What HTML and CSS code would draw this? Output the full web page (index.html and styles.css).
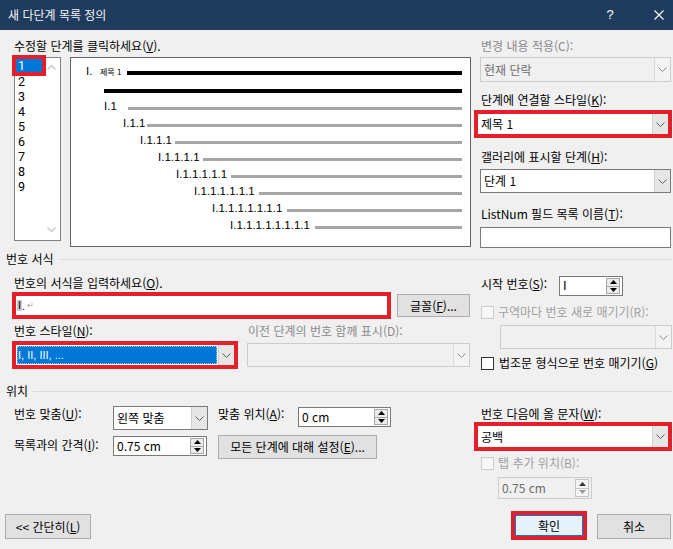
FILE: index.html
```html
<!DOCTYPE html>
<html lang="ko">
<head>
<meta charset="utf-8">
<title>새 다단계 목록 정의</title>
<link rel="stylesheet" href="styles.css">
</head>
<body>
<div class="dlg">
  <div class="titlebar">
    <span class="title">새 다단계 목록 정의</span>
    <span class="tb-help">?</span>
    <svg class="tb-close" width="10" height="10" viewBox="0 0 10 10"><path d="M0.5 0.5L9.5 9.5M9.5 0.5L0.5 9.5" stroke="#fff" stroke-width="1.1" fill="none"/></svg>
  </div>

  <div class="top">
    <div class="top-left">
      <div class="lbl">수정할 단계를 클릭하세요(<u>V</u>).</div>
      <div class="level-row">
        <div class="levels">
          <div class="lv-items">
            <div class="lv sel">1</div>
            <div class="lv">2</div>
            <div class="lv">3</div>
            <div class="lv">4</div>
            <div class="lv">5</div>
            <div class="lv">6</div>
            <div class="lv">7</div>
            <div class="lv">8</div>
            <div class="lv">9</div>
          </div>
          <div class="lv-scroll">
            <svg width="9" height="5" viewBox="0 0 9 5"><polyline points="0.5,4.5 4.5,0.5 8.5,4.5" fill="none" stroke="#c4c4c4" stroke-width="1.2"/></svg>
            <svg width="9" height="5" viewBox="0 0 9 5"><polyline points="0.5,0.5 4.5,4.5 8.5,0.5" fill="none" stroke="#c4c4c4" stroke-width="1.2"/></svg>
          </div>
        </div>
        <div class="preview">
          <div class="pv-row r1"><span class="pv-t w1">I.</span><span class="pv-s">제목 1</span><span class="pv-line blk"></span></div>
          <div class="pv-row r2"><span class="pv-line blk"></span></div>
          <div class="pv-row r3"><span class="pv-t">I.1</span><span class="pv-line"></span></div>
          <div class="pv-row r4"><span class="pv-t">I.1.1</span><span class="pv-line"></span></div>
          <div class="pv-row r5"><span class="pv-t">I.1.1.1</span><span class="pv-line"></span></div>
          <div class="pv-row r6"><span class="pv-t">I.1.1.1.1</span><span class="pv-line"></span></div>
          <div class="pv-row r7"><span class="pv-t">I.1.1.1.1.1</span><span class="pv-line"></span></div>
          <div class="pv-row r8"><span class="pv-t">I.1.1.1.1.1.1</span><span class="pv-line"></span></div>
          <div class="pv-row r9"><span class="pv-t">I.1.1.1.1.1.1.1</span><span class="pv-line"></span></div>
          <div class="pv-row r10"><span class="pv-t">I.1.1.1.1.1.1.1.1</span><span class="pv-line"></span></div>
        </div>
      </div>
    </div>

    <div class="side">
      <div class="lbl dis-t">변경 내용 적용(C):</div>
      <div class="dd dis apply">
        <span class="dd-val">현재 단락</span>
        <span class="dd-btn"><svg width="9" height="5" viewBox="0 0 9 5"><polyline points="0.5,0.5 4.5,4.5 8.5,0.5" fill="none" stroke="#8a8a8a" stroke-width="1"/></svg></span>
      </div>
      <div class="lbl mt10">단계에 연결할 스타일(<u>K</u>):</div>
      <div class="dd red style-dd">
        <span class="dd-val">제목 1</span>
        <span class="dd-btn"><svg width="9" height="5" viewBox="0 0 9 5"><polyline points="0.5,0.5 4.5,4.5 8.5,0.5" fill="none" stroke="#606060" stroke-width="1"/></svg></span>
      </div>
      <div class="lbl mt14">갤러리에 표시할 단계(<u>H</u>):</div>
      <div class="dd gallery">
        <span class="dd-val">단계 1</span>
        <span class="dd-btn"><svg width="9" height="5" viewBox="0 0 9 5"><polyline points="0.5,0.5 4.5,4.5 8.5,0.5" fill="none" stroke="#606060" stroke-width="1"/></svg></span>
      </div>
      <div class="lbl mt13">ListNum 필드 목록 이름(<u>T</u>):</div>
      <div class="txt listnum"></div>
    </div>
  </div>

  <div class="grp-h first"><span>번호 서식</span></div>

  <div class="mid">
    <div class="mid-left">
      <div class="lbl mt8">번호의 서식을 입력하세요(<u>O</u>).</div>
      <div class="fmt-row">
        <div class="txt red fmt-input"><span class="fld">I</span><span class="dot">.</span><span class="ret">↵</span></div>
        <div class="btn font-btn">글꼴(<u>F</u>)...</div>
      </div>
      <div class="two-col lbl-row">
        <div class="lbl">번호 스타일(<u>N</u>):</div>
        <div class="lbl dis-t">이전 단계의 번호 함께 표시(D):</div>
      </div>
      <div class="two-col dd-row">
        <div class="dd red numstyle">
          <span class="dd-val"><span class="selbox">I, II, III, ...</span></span>
          <span class="dd-btn"><svg width="9" height="5" viewBox="0 0 9 5"><polyline points="0.5,0.5 4.5,4.5 8.5,0.5" fill="none" stroke="#606060" stroke-width="1"/></svg></span>
        </div>
        <div class="dd dis prev-dd">
          <span class="dd-val"></span>
          <span class="dd-btn"><svg width="9" height="5" viewBox="0 0 9 5"><polyline points="0.5,0.5 4.5,4.5 8.5,0.5" fill="none" stroke="#8a8a8a" stroke-width="1"/></svg></span>
        </div>
      </div>
    </div>
    <div class="mid-right">
      <div class="start-row">
        <div class="lbl start-lbl">시작 번호(<u>S</u>):</div>
        <div class="spin start-spin">
          <span class="spin-val"><span class="caret-i">I</span></span>
          <span class="spin-btns">
            <span><svg width="7" height="4" viewBox="0 0 7 4"><polygon points="0,4 3.5,0 7,4" fill="#000"/></svg></span>
            <span><svg width="7" height="4" viewBox="0 0 7 4"><polygon points="0,0 3.5,4 7,0" fill="#000"/></svg></span>
          </span>
        </div>
      </div>
      <div class="cb-row mt8">
        <span class="cb dis"></span><span class="dis-t2">구역마다 번호 새로 매기기(R):</span>
      </div>
      <div class="dd dis restart-dd">
        <span class="dd-val"></span>
        <span class="dd-btn"><svg width="9" height="5" viewBox="0 0 9 5"><polyline points="0.5,0.5 4.5,4.5 8.5,0.5" fill="none" stroke="#8a8a8a" stroke-width="1"/></svg></span>
      </div>
      <div class="cb-row mt6">
        <span class="cb"></span><span>법조문 형식으로 번호 매기기(<u>G</u>)</span>
      </div>
    </div>
  </div>

  <div class="grp-h second"><span>위치</span></div>

  <div class="bot">
    <div class="bot-left">
      <div class="pos-row row1">
        <div class="lbl plbl">번호 맞춤(<u>U</u>):</div>
        <div class="dd align-dd">
          <span class="dd-val">왼쪽 맞춤</span>
          <span class="dd-btn"><svg width="9" height="5" viewBox="0 0 9 5"><polyline points="0.5,0.5 4.5,4.5 8.5,0.5" fill="none" stroke="#606060" stroke-width="1"/></svg></span>
        </div>
        <div class="lbl plbl2">맞춤 위치(<u>A</u>):</div>
        <div class="spin at-spin">
          <span class="spin-val">0 cm</span>
          <span class="spin-btns">
            <span><svg width="7" height="4" viewBox="0 0 7 4"><polygon points="0,4 3.5,0 7,4" fill="#000"/></svg></span>
            <span><svg width="7" height="4" viewBox="0 0 7 4"><polygon points="0,0 3.5,4 7,0" fill="#000"/></svg></span>
          </span>
        </div>
      </div>
      <div class="pos-row row2">
        <div class="lbl plbl ind">목록과의 간격(<u>I</u>):</div>
        <div class="spin indent-spin">
          <span class="spin-val">0.75 cm</span>
          <span class="spin-btns">
            <span><svg width="7" height="4" viewBox="0 0 7 4"><polygon points="0,4 3.5,0 7,4" fill="#000"/></svg></span>
            <span><svg width="7" height="4" viewBox="0 0 7 4"><polygon points="0,0 3.5,4 7,0" fill="#000"/></svg></span>
          </span>
        </div>
        <div class="btn all-btn">모든 단계에 대해 설정(<u>E</u>)...</div>
      </div>
    </div>
    <div class="bot-right">
      <div class="lbl mt7">번호 다음에 올 문자(<u>W</u>):</div>
      <div class="dd red follow-dd">
        <span class="dd-val">공백</span>
        <span class="dd-btn"><svg width="9" height="5" viewBox="0 0 9 5"><polyline points="0.5,0.5 4.5,4.5 8.5,0.5" fill="none" stroke="#606060" stroke-width="1"/></svg></span>
      </div>
      <div class="cb-row mt7">
        <span class="cb dis"></span><span class="dis-t2">탭 추가 위치(B):</span>
      </div>
      <div class="spin dis tab-spin">
        <span class="spin-val">0.75 cm</span>
        <span class="spin-btns">
          <span><svg width="7" height="4" viewBox="0 0 7 4"><polygon points="0,4 3.5,0 7,4" fill="#333"/></svg></span>
          <span><svg width="7" height="4" viewBox="0 0 7 4"><polygon points="0,0 3.5,4 7,0" fill="#9a9a9a"/></svg></span>
        </span>
      </div>
    </div>
  </div>

  <div class="footer">
    <div class="btn less-btn">&lt;&lt; 간단히(<u>L</u>)</div>
    <div class="btn ok-btn">확인</div>
    <div class="btn cancel-btn">취소</div>
  </div>
</div>
</body>
</html>
```

FILE: styles.css
```css
* { box-sizing: border-box; }
html, body { margin: 0; padding: 0; }
body {
  width: 673px;
  height: 549px;
  overflow: hidden;
  background: #f0f0f0;
  font-family: "Noto Sans CJK KR", "Noto Sans", sans-serif;
  font-size: 12px;
  line-height: 16px;
  color: #000;
}
u { text-decoration: underline; text-underline-offset: 1px; }

.dlg { width: 673px; height: 549px; }

/* title bar */
.titlebar {
  height: 30px;
  background: #1f3b5d;
  color: #fff;
  display: flex;
  align-items: center;
  padding: 0 9px 0 8px;
}
.title { flex: 1; color: #f2f4f7; }
.tb-help {
  width: 12px;
  text-align: center;
  font-family: "Liberation Sans", sans-serif;
  font-size: 13px;
  margin-right: 38px;
}
.tb-close { display: block; }

/* generic */
.lbl { height: 16px; white-space: nowrap; }
.dis-t { color: #8a8a8a; }
.dis-t2 { color: #a0a0a0; }
.mt6 { margin-top: 6px; }
.mt7 { margin-top: 7px; }
.mt8 { margin-top: 8px; }
.mt10 { margin-top: 10px; }
.mt13 { margin-top: 13px; }
.mt14 { margin-top: 14px; }

.red { outline: 4px solid #e3202a; outline-offset: -1px; }

.dd {
  display: flex;
  background: #fff;
  border: 1px solid #7a7a7a;
}
.dd-val {
  flex: 1;
  display: flex;
  align-items: center;
  padding-left: 3px;
  white-space: nowrap;
  overflow: hidden;
}
.dd-btn {
  width: 16px;
  flex: none;
  display: flex;
  align-items: center;
  justify-content: center;
  background: #e6e6e6;
  border-left: 1px solid #d0d0d0;
}
.dd.dis { background: #f0f0f0; border-color: #cccccc; color: #6d6d6d; }
.dd.dis .dd-btn { background: #f3f3f3; border-left-color: #dadada; }

.txt { background: #fff; border: 1px solid #7a7a7a; }

.btn {
  display: flex;
  align-items: center;
  justify-content: center;
  background: #e1e1e1;
  border: 1px solid #adadad;
  white-space: nowrap;
}

.spin {
  display: flex;
  background: #fff;
  border: 1px solid #7a7a7a;
}
.spin-val {
  flex: 1;
  display: flex;
  align-items: center;
  padding-left: 3px;
  white-space: nowrap;
}
.spin-btns {
  width: 16px;
  flex: none;
  display: flex;
  flex-direction: column;
  padding: 1px 2px 1px 0;
}
.spin-btns span {
  flex: 1;
  display: flex;
  align-items: center;
  justify-content: center;
  background: #ececec;
  border: 1px solid #a8a8a8;
}
.spin-btns span + span { border-top: none; }
.spin.dis { background: #f0f0f0; border-color: #cccccc; color: #6d6d6d; }
.spin.dis .spin-btns span { border-color: #c4c4c4; background: #f4f4f4; }

.cb-row { display: flex; align-items: center; height: 16px; white-space: nowrap; }
.cb {
  width: 13px;
  height: 13px;
  flex: none;
  border: 1px solid #333;
  background: #fff;
  margin-right: 5px;
}
.cb.dis { border-color: #cccccc; background: #f7f7f7; margin-right: 4px; }

/* top section */
.top {
  display: grid;
  grid-template-columns: 458px 193px;
  column-gap: 8px;
  padding: 8px 0 0 14px;
}
.level-row { display: flex; align-items: flex-start; gap: 9px; margin-top: 3px; }
.levels {
  width: 47px;
  height: 184px;
  border: 1px solid #828282;
  background: #fff;
  display: flex;
}
.lv-items { flex: 1; padding: 1px 0 0 1px; }
.lv {
  height: 15px;
  line-height: 15px;
  padding-left: 2px;
  font-family: Roboto, "Liberation Sans", sans-serif;
  font-size: 12.5px;
}
.lv.sel {
  width: 26px;
  height: 13px;
  line-height: 13px;
  margin-bottom: 2px;
  background: #0078d7;
  color: #fff;
  outline: 4px solid #e3202a;
}
.lv-scroll {
  width: 17px;
  flex: none;
  display: flex;
  flex-direction: column;
  justify-content: space-between;
  align-items: center;
  padding: 7px 0 8px;
}

.preview {
  width: 401px;
  height: 190px;
  border: 1px solid #646464;
  background: #fff;
  padding: 5px 8px 0 0;
}
.pv-row {
  display: flex;
  align-items: baseline;
  height: 17px;
  line-height: 17px;
  padding-left: var(--x);
}
.pv-t {
  flex: none;
  width: var(--w);
  font-family: "Liberation Sans", sans-serif;
  font-size: 11.5px;
  white-space: nowrap;
}
.pv-s {
  flex: none;
  width: 27px;
  font-size: 8px;
  white-space: nowrap;
}
.pv-line { flex: 1; height: 3px; background: #a6a6a6; }
.pv-line.blk { height: 4px; background: #000; }
.r1 { height: 18px; --x: 15px; --w: 14px; }
.r2 { --x: 33px; align-items: flex-end; padding-bottom: 5px; }
.r3 { --x: 33px; --w: 24px; }
.r4 { --x: 52px; --w: 24px; }
.r5 { --x: 69px; --w: 35px; }
.r6 { --x: 87px; --w: 45px; }
.r7 { --x: 105px; --w: 55px; }
.r8 { --x: 123px; --w: 65px; }
.r9 { --x: 141px; --w: 75px; }
.r10 { --x: 159px; --w: 85px; }

.side { display: flex; flex-direction: column; align-items: flex-start; }
.side .lbl { padding-left: 1px; }
.apply { margin-top: 3px; width: 191px; height: 25px; }
.style-dd { margin-top: 5px; margin-left: -3px; width: 192px; height: 22px; }
.gallery { margin-top: 4px; width: 191px; height: 24px; }
.listnum { margin-top: 5px; width: 191px; height: 21px; }

/* group headers */
.grp-h {
  display: flex;
  align-items: center;
  height: 16px;
  padding: 0 1px 0 6px;
  white-space: nowrap;
}
.grp-h::after {
  content: "";
  flex: 1;
  height: 1px;
  background: #dcdcdc;
  margin-left: 5px;
}
.grp-h.first { margin-top: 3px; }
.grp-h.second { margin-top: 12px; }

/* middle section */
.mid {
  display: grid;
  grid-template-columns: 458px 192px;
  column-gap: 9px;
  padding-left: 14px;
}
.fmt-row { display: flex; align-items: flex-start; height: 23px; margin-top: 3px; }
.fmt-input {
  margin: 1px 0 0 1px;
  width: 373px;
  height: 21px;
  padding-left: 1px;
  display: flex;
  align-items: center;
  font-family: "Liberation Sans", sans-serif;
  font-size: 11px;
}
.fld { background: #c8c8c8; padding: 0 1px; line-height: 11px; }
.dot { margin-right: 2px; }
.ret { color: #9a9a9a; font-family: "DejaVu Sans", sans-serif; font-size: 8px; }
.font-btn { margin-left: 9px; width: 73px; height: 23px; }

.two-col { display: grid; grid-template-columns: 234px 224px; }
.lbl-row { margin-top: 6px; }
.dd-row { margin-top: 4px; align-items: start; }
.numstyle { margin: 1px 0 0 1px; width: 220px; height: 22px; }
.numstyle .dd-val { padding: 1px; }
.selbox {
  display: flex;
  align-items: center;
  width: 100%;
  height: 100%;
  padding-left: 1px;
  background: #0078d7;
  color: #fff;
  font-family: "Liberation Sans", sans-serif;
  font-size: 11px;
  outline: 1px dotted #9cc8ee;
  outline-offset: -1px;
}
.prev-dd { margin-left: -1px; width: 223px; height: 24px; }

.mid-right { display: flex; flex-direction: column; align-items: flex-start; }
.start-row { display: flex; align-items: flex-start; margin-top: 9px; }
.start-lbl { width: 78px; }
.start-spin { width: 64px; height: 20px; }
.caret-i { font-family: "Liberation Sans", sans-serif; font-size: 13px; font-weight: 300; }
.restart-dd { margin-top: 5px; margin-left: 19px; width: 172px; height: 24px; }

/* bottom section */
.bot {
  display: grid;
  grid-template-columns: 458px 192px;
  column-gap: 9px;
  padding-left: 14px;
}
.pos-row { display: flex; align-items: flex-start; }
.row1 { margin-top: 7px; }
.row2 { margin-top: 5px; }
.plbl { width: 99px; }
.plbl.ind { margin-top: 2px; }
.align-dd { width: 95px; height: 24px; }
.plbl2 { margin-left: 10px; width: 80px; }
.at-spin { margin-top: 1px; width: 93px; height: 20px; }
.indent-spin { margin-top: 1px; width: 94px; height: 20px; }
.all-btn { margin-left: 11px; width: 159px; height: 24px; }

.bot-right { display: flex; flex-direction: column; align-items: flex-start; }
.follow-dd { margin-top: 3px; margin-left: -4px; width: 192px; height: 23px; }
.tab-spin { margin-top: 6px; margin-left: 17px; width: 94px; height: 22px; }

/* footer */
.footer {
  display: flex;
  align-items: flex-start;
  margin-top: 15px;
  padding: 0 2px 0 5px;
}
.less-btn { width: 86px; height: 25px; }
.ok-btn {
  margin-left: auto;
  margin-top: 1px;
  width: 68px;
  height: 21px;
  background: #e5f1fb;
  border-color: #0078d7;
  outline: 4px solid #e3202a;
}
.cancel-btn { margin-left: 14px; width: 74px; height: 25px; }
```
